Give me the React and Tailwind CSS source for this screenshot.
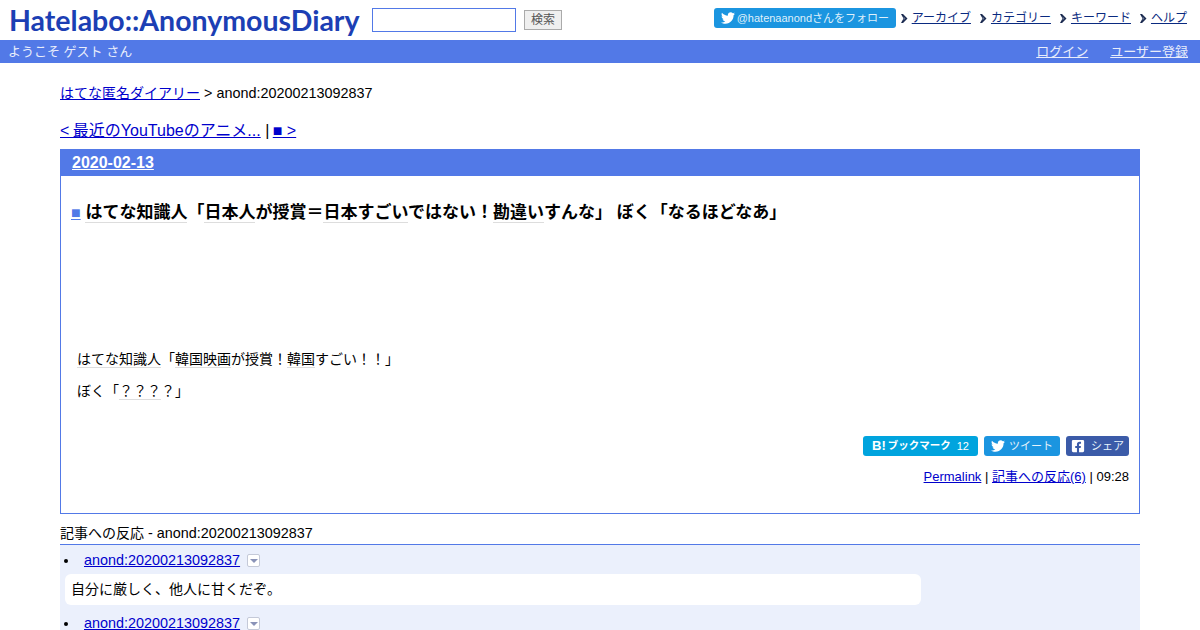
import React from 'react';
import { FaTwitter, FaFacebookSquare } from 'react-icons/fa';

const sans = '"Liberation Sans", "Noto Sans CJK JP", sans-serif';

const Kw = ({ children }) => (
  <span className="border-b border-[#ddd]">{children}</span>
);

const Ja = ({ children }) => <span className="text-[14px]">{children}</span>;

const NavLink = ({ children }) => (
  <span className="flex items-center">
    <svg width="7" height="9" viewBox="0 0 7 9" className="mr-[4px]">
      <path d="M0 0h2l4.5 4.5L2 9H0l2.5-4.5z" fill="#1a2a50" />
      <path d="M2.5 2.5 4.5 4.5 2.5 6.5z" fill="#6a7590" />
    </svg>
    <a href="#" className="text-[#0a2a80] underline">{children}</a>
  </span>
);

const TrackbackItem = () => (
  <li className="flex items-center h-[27px] pl-1">
    <span className="w-[4px] h-[4px] rounded-full bg-black" />
    <a href="#" className="ml-[16px] text-[14.4px] text-[#0000cc] underline">anond:20200213092837</a>
    <span className="ml-[7px] w-[13px] h-[13px] flex items-center justify-center border border-[#c4c9d8] bg-white rounded-[2px]">
      <span className="border-x-[4px] border-x-transparent border-t-[4px] border-t-[#8a93b8]" />
    </span>
  </li>
);

export default function App() {
  return (
    <div className="h-[630px] overflow-hidden bg-white text-black" style={{ fontFamily: sans }}>
      {/* Header */}
      <div className="flex items-start justify-between h-[40px]">
        <div className="flex items-start">
          <span className="ml-[9px] mt-[1px] w-[349px] text-[28.5px] leading-[38px] font-bold text-[#1c3fb4] whitespace-nowrap" style={{ fontFamily: 'Lato, sans-serif' }}>
            Hatelabo::AnonymousDiary
          </span>
          <input className="ml-[14px] mt-[8px] w-[144px] h-[24px] border border-[#5279e7] bg-white" />
          <button className="ml-[8px] mt-[10px] w-[38px] h-[20px] border border-[#aaa] bg-[#efefef] text-[12px] text-[#555] leading-none">検索</button>
        </div>
        <div className="flex items-center mt-[8px] mr-[13px] text-[12px] whitespace-nowrap">
          <span className="flex items-center w-[182px] h-[20px] rounded-[3px] bg-[#1b95e0] text-white text-[11px] pl-[7px]">
            <FaTwitter className="text-[14px] mr-[2px]" />
            <span className="text-[#dff0fb]">@hatenaanondさんをフォロー</span>
          </span>
          <span className="ml-[5px] flex gap-[9px]">
            <NavLink>アーカイブ</NavLink>
            <NavLink>カテゴリー</NavLink>
            <NavLink>キーワード</NavLink>
            <NavLink>ヘルプ</NavLink>
          </span>
        </div>
      </div>

      {/* Welcome bar */}
      <div className="flex items-center justify-between h-[23px] bg-[#5279e7] text-[13px] text-[#e8edfb] pl-[8px] pr-[11px]">
        <span>ようこそ ゲスト さん</span>
        <span className="flex gap-[22px] pr-px">
          <a href="#" className="underline">ログイン</a>
          <a href="#" className="underline">ユーザー登録</a>
        </span>
      </div>

      <div className="mx-[60px]">
        <div className="mt-[21px] text-[14.4px] leading-[18px]">
          <a href="#" className="text-[#0000cc] underline"><Ja>はてな匿名ダイアリー</Ja></a> &gt; anond:20200213092837
        </div>

        <div className="mt-[19px] text-[16px] leading-[20px]">
          <a href="#" className="text-[#0000cc] underline">&lt; <span className="-ml-px">最近のYouTubeのアニメ...</span></a> | <a href="#" className="-ml-px text-[#0000cc] underline">■ &gt;</a>
        </div>

        {/* Day section */}
        <div className="mt-[8px] h-[365px] border border-[#5279e7] flex flex-col">
          <div className="h-[27px] -mt-px -mx-px bg-[#5279e7] pl-[12px] text-[16px] leading-[27px] font-bold text-white">
            <a href="#" className="underline">2020-02-13</a>
          </div>

          <h3 className="mt-[26px] ml-[10px] text-[17px] leading-[22px] font-bold whitespace-nowrap">
            <a href="#" className="text-[#5279e7] text-[16px] font-normal underline">■</a>
            {' '}<Kw>はてな知識人</Kw>「<Kw>日本人</Kw>が授賞＝<Kw>日本すごい</Kw>ではない！<Kw>勘違い</Kw>すんな」 ぼく「なるほどなあ」
          </h3>

          <p className="mt-[126px] ml-[16px] text-[14px] leading-[18px]">
            <Kw>はてな知識人</Kw>「<Kw>韓国映画</Kw>が授賞！<Kw>韓国</Kw>すごい！！」
          </p>
          <p className="mt-[14px] ml-[16px] text-[14px] leading-[18px]">
            ぼく「<Kw>？？？</Kw>？」
          </p>

          <div className="mt-[36px] mr-[10px] flex justify-end gap-[6px] text-[11px] text-[#e6f3fb]">
            <span className="flex items-center justify-center w-[115px] h-[20px] rounded-[3px] bg-[#00a4de] text-white">
              <span className="font-bold text-[13px]">B!</span>
              <span className="font-bold text-[10.5px] ml-[2px]">ブックマーク</span>
              <span className="ml-[6px]">12</span>
            </span>
            <span className="flex items-center justify-center w-[76px] h-[20px] rounded-[3px] bg-[#1b95e0]">
              <FaTwitter className="text-[14px] mr-[4px] text-white" />ツイート
            </span>
            <span className="flex items-center justify-center w-[63px] h-[20px] rounded-[3px] bg-[#3b5ba8]">
              <FaFacebookSquare className="text-[14px] mr-[6px] text-white" />シェア
            </span>
          </div>

          <div className="mt-[12px] mr-[10px] text-right text-[13px] leading-[18px]">
            <a href="#" className="text-[#0000cc] underline">Permalink</a> | <a href="#" className="text-[#0000cc] underline">記事への反応(6)</a> | 09:28
          </div>
        </div>

        {/* Trackbacks */}
        <div className="mt-[10px] h-[21px] border-b border-[#5279e7] text-[14.4px] leading-[19px]">
          <Ja>記事への反応</Ja> - anond:20200213092837
        </div>
        <ul className="bg-[#ebf0fc] pt-[2px] pb-[8px]">
          <TrackbackItem />
          <li className="ml-[5px] w-[856px] h-[31px] rounded-[6px] bg-white pl-[6px] text-[14px] leading-[31px]">
            自分に厳しく、他人に甘くだぞ。
          </li>
          <li className="h-[5px]" />
          <TrackbackItem />
        </ul>
      </div>
    </div>
  );
}
